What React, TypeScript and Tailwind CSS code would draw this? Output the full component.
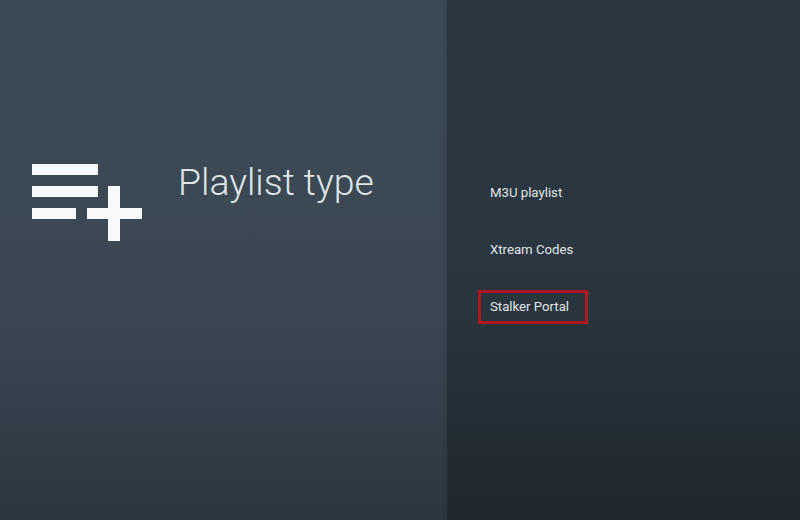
export default function App() {
  const items = ["M3U playlist", "Xtream Codes", "Stalker Portal"];
  return (
    <div className="flex h-[520px] w-[800px] overflow-hidden font-['Roboto',sans-serif]">
      <div className="flex h-full w-[447px] items-start bg-gradient-to-b from-[#3c4a55] via-[#3b4853] via-60% to-[#2b3640] pl-8 pt-[164px]">
        <svg width="110" height="77" viewBox="0 0 110 77" fill="#f7f9fa" className="shrink-0">
          <rect x="0" y="0" width="66" height="11" />
          <rect x="0" y="22" width="66" height="11" />
          <rect x="0" y="44" width="44" height="11" />
          <rect x="55" y="44" width="55" height="11" />
          <rect x="76" y="22" width="12" height="55" />
        </svg>
        <h1 className="-mt-[3px] ml-9 text-[37.4px] leading-[42px] font-light text-[#dfe5e8]">Playlist type</h1>
      </div>
      <div className="h-full flex-1 bg-gradient-to-b from-[#2a3740] via-[#2b3740] via-50% to-[#20282e] pl-[43px] pt-[177px] shadow-[-1px_0_3px_rgba(41,54,63,0.6)]">
        <ul className="flex flex-col gap-[25px]">
          {items.map((t) => (
            <li
              key={t}
              className={`-ml-[11px] flex h-8 w-[108px] items-center pl-[11px] text-[13.2px] whitespace-nowrap text-[#e0e6e9] ${
                t === "Stalker Portal" ? "outline-[3px] -outline-offset-2 outline-[#ad1722]" : ""
              }`}
            >
              {t}
            </li>
          ))}
        </ul>
      </div>
    </div>
  );
}
